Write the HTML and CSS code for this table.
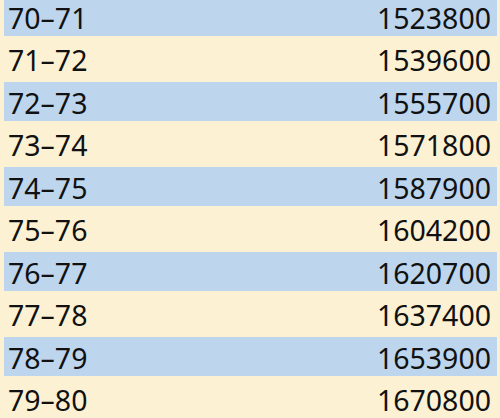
FILE: index.html
```html
<!DOCTYPE html>
<html>
<head>
<meta charset="utf-8">
<link rel="stylesheet" href="styles.css">
</head>
<body>
<div class="table">
  <div class="row blue"><span>70–71</span><span>1523800</span></div>
  <div class="row cream"><span>71–72</span><span>1539600</span></div>
  <div class="row blue"><span>72–73</span><span>1555700</span></div>
  <div class="row cream"><span>73–74</span><span>1571800</span></div>
  <div class="row blue"><span>74–75</span><span>1587900</span></div>
  <div class="row cream"><span>75–76</span><span>1604200</span></div>
  <div class="row blue"><span>76–77</span><span>1620700</span></div>
  <div class="row cream"><span>77–78</span><span>1637400</span></div>
  <div class="row blue"><span>78–79</span><span>1653900</span></div>
  <div class="row cream"><span>79–80</span><span>1670800</span></div>
</div>
</body>
</html>
```
FILE: styles.css
```css
html, body {
  margin: 0;
  padding: 0;
  background: #fdf1d4;
  overflow: hidden;
}
body {
  width: 500px;
  height: 418px;
}
.table {
  display: flex;
  flex-direction: column;
  margin-top: -3px;
  font-family: "Noto Sans", "Open Sans", sans-serif;
  font-size: 28.5px;
  color: #111;
}
.row {
  display: flex;
  justify-content: space-between;
  align-items: center;
  margin: 0 3px 0 4px;
  padding: 3px 6px 0 4px;
  box-sizing: border-box;
  line-height: 1;
}
.dash {
  letter-spacing: 0;
}
.blue {
  height: 39px;
  background: #bdd6ee;
}
.cream {
  height: 46px;
}
```
